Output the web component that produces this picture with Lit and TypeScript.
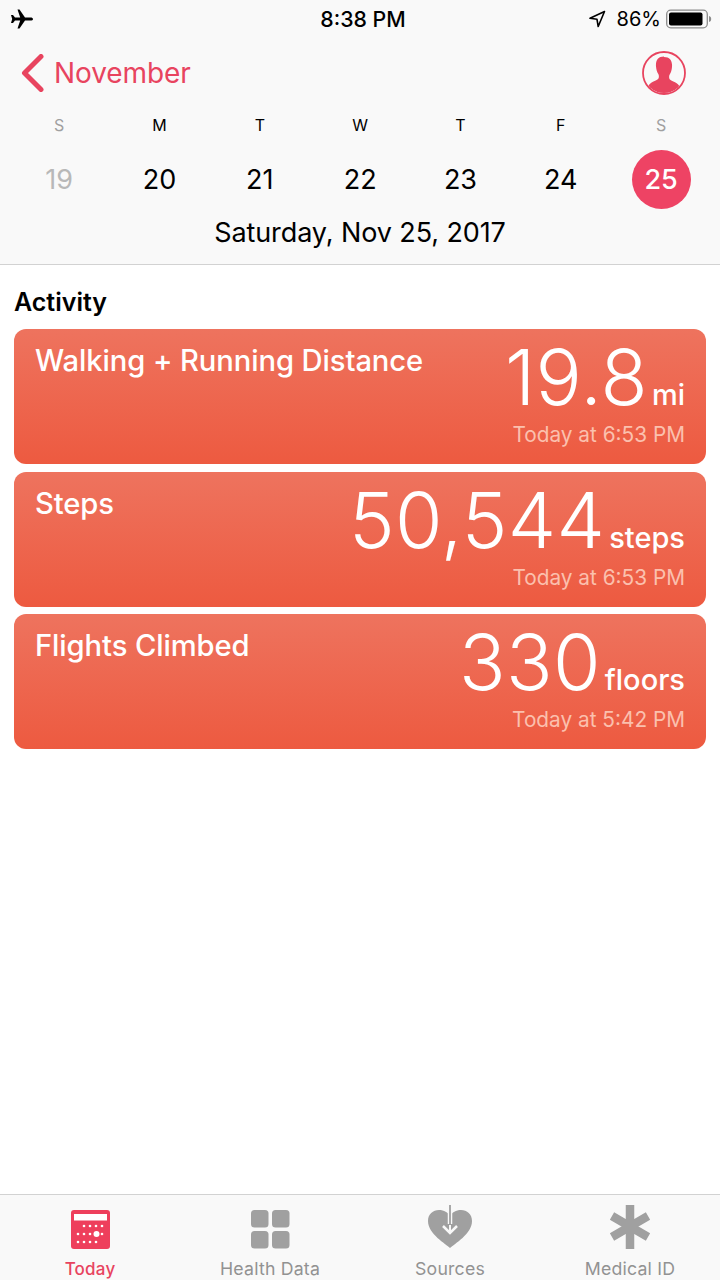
import { LitElement, html, css, svg } from "lit";
import { customElement } from "lit/decorators.js";

const days = [
  { w: "S", d: "19", cls: "muted" },
  { w: "M", d: "20", cls: "" },
  { w: "T", d: "21", cls: "" },
  { w: "W", d: "22", cls: "" },
  { w: "T", d: "23", cls: "" },
  { w: "F", d: "24", cls: "" },
  { w: "S", d: "25", cls: "sel" },
];
const cards = [
  { t: "Walking + Running Distance", v: "19.8", u: "mi", s: "Today at 6:53 PM" },
  { t: "Steps", v: "50,544", u: "steps", s: "Today at 6:53 PM" },
  { t: "Flights Climbed", v: "330", u: "floors", s: "Today at 5:42 PM" },
];

const calDots = () => {
  const out = [];
  const rows: [number, number[]][] = [
    [16, [13, 19, 25, 31]],
    [24, [7, 13, 19, 31]],
    [32, [7, 13, 19, 25]],
  ];
  for (const [y, xs] of rows) for (const x of xs) out.push(svg`<circle cx=${x} cy=${y} r="1.3" fill="#fff"/>`);
  return out;
};

@customElement("app-root")
export class AppRoot extends LitElement {
  static styles = css`
    :host { display: flex; flex-direction: column; height: 1280px; width: 720px; background: #fff; font-family: Inter, "Liberation Sans", sans-serif; color: #000; overflow: hidden; }
    .top { background: #f9f9f9; height: 264px; border-bottom: 1px solid #d2d2d2; flex: none; }
    .status { height: 37px; display: grid; grid-template-columns: 1fr auto 1fr; align-items: center; padding: 0 8px 0 10px; }
    .time { font-size: 21.3px; font-weight: 500; margin-left: 4px; }
    .st-right { display: flex; justify-content: flex-end; align-items: center; font-size: 20px; }
    .pct { margin: 0 5px 0 11px; }
    .nav { height: 72px; display: flex; align-items: center; justify-content: space-between; padding: 0 34px 0 21px; }
    .back { display: flex; align-items: center; gap: 10px; color: #e8445f; font-size: 28px; letter-spacing: -0.1px; }
    .week { display: grid; grid-template-columns: repeat(7, 100.33px); padding: 0 9px; margin-top: 3px; }
    .wd { height: 26px; display: flex; align-items: center; justify-content: center; font-size: 16px; }
    .wd.muted, .wd.sel { color: #a0a0a0; }
    .dn { height: 59px; margin-top: 12px; grid-row: 2; display: flex; align-items: center; justify-content: center; font-size: 27px; }
    .dn.muted { color: #b8b8b8; }
    .dn span { width: 59px; height: 59px; display: flex; align-items: center; justify-content: center; border-radius: 50%; }
    .dn.sel span { background: #ee4364; color: #fff; font-weight: 500; }
    .date { text-align: center; font-size: 27px; margin-top: 7px; line-height: 34px; letter-spacing: -0.1px; }
    main { flex: 1; padding: 0 14px; }
    h2 { margin: 22px 0 0 0; font-size: 25px; line-height: 30px; font-weight: 600; }
    .cards { display: flex; flex-direction: column; gap: 7.5px; margin-top: 12px; }
    .card { height: 135px; border-radius: 12px; background: linear-gradient(#ee735e, #ed5a40); color: #fff; display: flex; justify-content: space-between; padding: 14px 21px 0 21px; box-sizing: border-box; }
    .name { font-size: 29.2px; line-height: 35px; font-weight: 500; letter-spacing: -0.1px; }
    .right { display: flex; flex-direction: column; align-items: flex-end; }
    .val { display: flex; align-items: baseline; gap: 4px; margin-top: 3px; }
    .num { font-size: 77px; line-height: 62px; font-weight: 270; letter-spacing: 0.3px; }
    .unit { font-size: 29px; line-height: 30px; font-weight: 500; }
    .sub { margin-top: 12px; font-size: 20.8px; line-height: 26px; color: #fbc0ae; }
    .tabs { flex: none; height: 85px; background: #f9f9f9; border-top: 1px solid #d2d2d2; display: grid; grid-template-columns: repeat(4, 1fr); }
    .tab { display: flex; flex-direction: column; align-items: center; color: #929292; font-size: 17.7px; letter-spacing: 0.2px; }
    .tab.on { color: #e8445f; font-weight: 500; font-size: 17px; }
    .ic { height: 59px; display: flex; align-items: flex-end; justify-content: center; padding-bottom: 5px; box-sizing: border-box; }
    .lb { line-height: 22px; margin-top: 4px; }
    svg { display: block; }
  `;

  render() {
    return html`
      <div class="top">
        <div class="status">
          <svg width="24" height="20" viewBox="0 0 24 20" fill="#000"><path d="M23 10c0-1-1-1.600-2.500-1.600H15L9.500 0.500H7.500L10.200 8.400H5L3 6H1l1.200 4L1 14h2l2-2.400h5.200L7.500 19.500h2L15 11.600h5.500C22 11.600 23 11 23 10z"/></svg>
          <div class="time">8:38 PM</div>
          <div class="st-right">
            <svg width="18" height="18" viewBox="0 0 18 18" fill="none" stroke="#000" stroke-width="1.600" stroke-linejoin="round"><path d="M16.500 1.500 2 8.300l7 1 1.200 7.200z"/></svg>
            <span class="pct">86%</span>
            <svg width="46" height="20" viewBox="0 0 46 20"><rect x="0.700" y="1.200" width="40.600" height="17.600" rx="4" fill="none" stroke="#8c8c8c" stroke-width="1.300"/><rect x="3" y="3.500" width="33.500" height="13" rx="2" fill="#000"/><path d="M43 7c1.500.3 2.200 1.500 2.200 3s-.7 2.700-2.200 3z" fill="#8c8c8c"/></svg>
          </div>
        </div>
        <div class="nav">
          <div class="back">
            <svg width="23" height="38" viewBox="0 0 23 38" fill="none" stroke="#e8445f" stroke-width="5" stroke-linecap="round" stroke-linejoin="round"><path d="M20 2.500 3.500 19 20 35.500"/></svg>
            <span>November</span>
          </div>
          <svg width="44" height="44" viewBox="0 0 44 44">
            <defs><clipPath id="c"><circle cx="22" cy="22" r="20"/></clipPath></defs>
            <circle cx="22" cy="22" r="21" fill="none" stroke="#e8445f" stroke-width="1.800"/>
            <path clip-path="url(#c)" fill="#e8445f" d="M22 5.500c-6 0-8.500 4-8 10 .3 3 1 5.500 2.300 7.500.8 1.300.8 3.500 0 4.700-1.500 2-9.300 3.500-10.300 8.300L8 44h28l2-7.500c-1-4.800-8.800-6.300-10.300-8.300-.8-1.200-.8-3.400 0-4.700 1.300-2 2-4.500 2.300-7.500.5-6-2-10-8-10z"/>
          </svg>
        </div>
        <div class="week">
          ${days.map((x) => html`<div class="wd ${x.cls}">${x.w}</div>`)}
          ${days.map((x) => html`<div class="dn ${x.cls}"><span>${x.d}</span></div>`)}
        </div>
        <div class="date">Saturday, Nov 25, 2017</div>
      </div>
      <main>
        <h2>Activity</h2>
        <div class="cards">
          ${cards.map(
            (c) => html`<div class="card">
              <div class="name">${c.t}</div>
              <div class="right">
                <div class="val"><span class="num">${c.v}</span><span class="unit">${c.u}</span></div>
                <div class="sub">${c.s}</div>
              </div>
            </div>`
          )}
        </div>
      </main>
      <div class="tabs">
        <div class="tab on">
          <div class="ic"><svg width="39" height="39" viewBox="0 0 39 39"><rect width="39" height="39" rx="3" fill="#ee3f5c"/><rect x="3" y="4" width="33" height="6.500" fill="#fff"/>${calDots()}<circle cx="25.500" cy="24" r="3" fill="#fff"/></svg></div>
          <div class="lb">Today</div>
        </div>
        <div class="tab">
          <div class="ic"><svg width="39" height="39" viewBox="0 0 39 39" fill="#a0a0a0"><rect width="17.500" height="17.500" rx="3.500"/><rect x="21" width="17.500" height="17.500" rx="3.500"/><rect y="21" width="17.500" height="17.500" rx="3.500"/><rect x="21" y="21" width="17.500" height="17.500" rx="3.500"/></svg></div>
          <div class="lb">Health Data</div>
        </div>
        <div class="tab">
          <div class="ic"><svg width="46" height="46" viewBox="0 0 46 46"><path fill="#a0a0a0" d="M23 45C19 41 1 31 1 18 1 11 6 7 12 7c5 0 9 2.500 11 6 2-3.500 6-6 11-6 6 0 11 4 11 11 0 13-18 23-22 27z"/><path d="M23 2v19" stroke="#f9f9f9" stroke-width="4.500" fill="none"/><path d="M23 2v22" stroke="#a0a0a0" stroke-width="1.800" fill="none"/><path d="M16 23 23 30 30 23" stroke="#f9f9f9" stroke-width="2.500" fill="none"/><path d="M23 22v7" stroke="#f9f9f9" stroke-width="2" fill="none"/></svg></div>
          <div class="lb">Sources</div>
        </div>
        <div class="tab">
          <div class="ic"><svg width="42" height="44" viewBox="0 0 42 44" fill="none" stroke="#a0a0a0" stroke-width="8.500"><path d="M21 0v44M3 11l36 21M39 11 3 32"/></svg></div>
          <div class="lb">Medical ID</div>
        </div>
      </div>
    `;
  }
}
